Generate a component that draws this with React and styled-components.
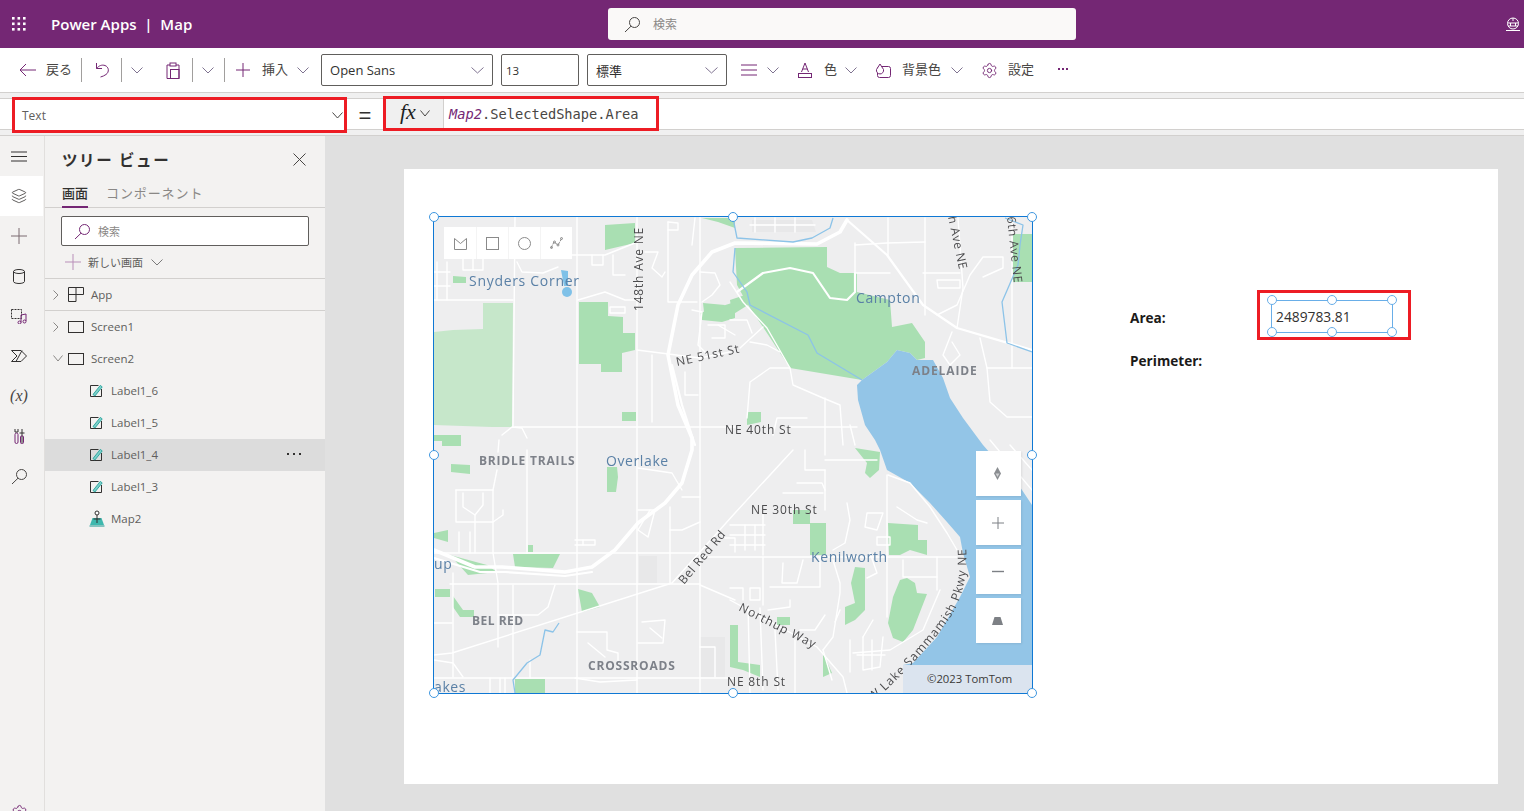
import styled, { createGlobalStyle } from "styled-components";
import { Settings, Layers } from "lucide-react";

const PURPLE = "#742774";
const CJK = `"Open Sans", "Noto Sans CJK JP", sans-serif`;

const GlobalStyle = createGlobalStyle`
  html, body { margin: 0; padding: 0; height: 100%; overflow: hidden; background: #fff; }
  body { font-family: ${CJK}; color: #323130; }
  * { box-sizing: border-box; }
`;

const Page = styled.div`
  width: 1524px;
  height: 811px;
  display: flex;
  flex-direction: column;
  overflow: hidden;
`;

/* header */
const Header = styled.header`
  height: 48px;
  flex-shrink: 0;
  background: ${PURPLE};
  display: flex;
  align-items: center;
  padding-left: 11px;
  position: relative;
`;
const AppTitle = styled.div`
  margin-left: 24px;
  color: #fff;
  font-size: 15px;
  font-weight: 600;
  white-space: pre;
`;
const HeaderSearch = styled.div`
  position: absolute;
  left: 608px;
  top: 8px;
  width: 468px;
  height: 32px;
  background: #faf9f8;
  border-radius: 3px;
  display: flex;
  align-items: center;
  padding-left: 16px;
  gap: 12px;
  font-size: 12px;
  color: #8a8886;
`;
const HeaderRight = styled.div`
  margin-left: auto;
  width: 19px;
  display: flex;
  justify-content: flex-start;
`;

/* toolbar */
const Toolbar = styled.div`
  height: 45px;
  flex-shrink: 0;
  background: #fff;
  border-bottom: 1px solid #d2d0ce;
  display: flex;
  align-items: center;
  padding-left: 19px;
`;
const Tool = styled.span`
  display: flex;
  align-items: center;
  flex-shrink: 0;
  margin-left: ${({ $ml }) => $ml || 0}px;
`;
const ToolLabel = styled(Tool)`
  font-size: 13px;
  line-height: 18px;
  margin-top: -2px;
  color: #484644;
`;
const Sep = styled.span`
  width: 1px;
  height: 24px;
  background: #a19f9d;
  flex-shrink: 0;
  margin-left: ${({ $ml }) => $ml}px;
`;
const Select = styled.div`
  width: ${({ $w }) => $w}px;
  height: 32px;
  flex-shrink: 0;
  margin-left: ${({ $ml }) => $ml}px;
  border: 1px solid #605e5c;
  border-radius: 2px;
  background: #fff;
  display: flex;
  align-items: center;
  justify-content: space-between;
  padding: 0 8px 0 ${({ $pl }) => $pl || 8}px;
  font-size: ${({ $fs }) => $fs || 13}px;
  color: #323130;
`;

/* formula bar */
const FormulaWrap = styled.div`
  flex-shrink: 0;
  background: #f0f0f0;
  padding: 5px 0;
`;
const FormulaBar = styled.div`
  height: 32px;
  background: #fff;
  border-top: 1px solid #d2d0ce;
  border-bottom: 1px solid #d2d0ce;
  display: flex;
  align-items: center;
`;
const NameBox = styled.div`
  width: 335px;
  height: 36px;
  margin-left: 12px;
  margin-top: 2px;
  flex-shrink: 0;
  border: 3px solid #ed1c24;
  background: #fff;
  display: flex;
  align-items: center;
  justify-content: space-between;
  padding: 0 1px 0 7px;
  font-size: 12px;
  color: #605e5c;
  position: relative;
  z-index: 1;
`;
const Equals = styled.div`
  width: 36px;
  text-align: center;
  font-size: 22px;
  line-height: 22px;
  margin-top: 4px;
  color: #323130;
  font-family: "Liberation Sans", sans-serif;
`;
const FormulaBox = styled.div`
  width: 276px;
  height: 35px;
  flex-shrink: 0;
  margin-top: -1px;
  border: 3px solid #ed1c24;
  background: #fff;
  display: flex;
  align-items: stretch;
  position: relative;
  z-index: 1;
`;
const FxButton = styled.div`
  width: 58px;
  background: #f0f0f0;
  border-right: 1px solid #d2d0ce;
  display: flex;
  align-items: center;
  padding-left: 14px;
  gap: 4px;
`;
const FxText = styled.span`
  font-family: "Liberation Serif", serif;
  font-style: italic;
  font-size: 22px;
  line-height: 24px;
  color: #201f1e;
  margin-top: -3px;
`;
const FormulaCode = styled.div`
  padding-left: 5px;
  font-family: "DejaVu Sans Mono", monospace;
  font-size: 13.7px;
  line-height: 31px;
  color: #484644;
  white-space: pre;
`;
const Keyword = styled.span`
  color: ${PURPLE};
  font-style: italic;
`;

/* main */
const Main = styled.div`
  flex: 1;
  min-height: 0;
  display: flex;
  border-top: 1px solid #d2d0ce;
`;
const Rail = styled.nav`
  width: 45px;
  flex-shrink: 0;
  background: #f3f2f1;
  border-right: 1px solid #e1dfdd;
  display: flex;
  flex-direction: column;
`;
const RailItem = styled.div`
  height: 40px;
  width: 43px;
  flex-shrink: 0;
  display: flex;
  align-items: center;
  justify-content: center;
  padding-right: 5px;
  background: ${({ $active }) => ($active ? "#fff" : "transparent")};
  margin-top: ${({ $auto }) => ($auto ? "auto" : "0")};
  margin-bottom: ${({ $auto }) => ($auto ? "-21px" : "0")};
`;
const VarGlyph = styled.span`
  font-family: "Liberation Serif", serif;
  font-style: italic;
  font-size: 16px;
  color: #484644;
`;

const Panel = styled.aside`
  width: 280px;
  flex-shrink: 0;
  background: #f3f2f1;
  display: flex;
  flex-direction: column;
`;
const PanelHead = styled.div`
  height: 47px;
  display: flex;
  align-items: center;
  justify-content: space-between;
  padding: 0 19px 1px 17px;
  font-size: 15.5px;
  font-weight: 600;
  letter-spacing: 1.6px;
  color: #323130;
`;
const Tabs = styled.div`
  height: 25px;
  border-bottom: 1px solid #d2d0ce;
  display: flex;
  gap: 18px;
  padding-left: 17px;
`;
const Tab = styled.div`
  height: 25px;
  font-size: 13px;
  line-height: 21px;
  letter-spacing: ${({ $on }) => ($on ? "0" : "0.9px")};
  color: ${({ $on }) => ($on ? "#323130" : "#8a8886")};
  font-weight: ${({ $on }) => ($on ? 500 : 400)};
  border-bottom: ${({ $on }) => ($on ? `2px solid ${PURPLE}` : "none")};
`;
const TreeSearch = styled.div`
  margin: 8px 16px 0 16px;
  height: 30px;
  background: #fff;
  border: 1px solid #605e5c;
  border-radius: 2px;
  display: flex;
  align-items: center;
  gap: 7px;
  padding-left: 12px;
  font-size: 11px;
  color: #8a8886;
`;
const NewScreen = styled.div`
  height: 33px;
  display: flex;
  align-items: center;
  padding-left: 20px;
  border-bottom: 1px solid #d2d0ce;
  font-size: 11px;
  color: #605e5c;
`;
const TreeRow = styled.div`
  height: 32px;
  display: flex;
  align-items: center;
  padding-left: ${({ $depth }) => ($depth ? 44 : 8)}px;
  padding-bottom: ${({ $line }) => ($line ? 0 : 1)}px;
  background: ${({ $sel }) => ($sel ? "#dcdcdc" : "transparent")};
  border-bottom: ${({ $line }) => ($line ? "1px solid #d2d0ce" : "none")};
  font-size: 11.5px;
  color: #605e5c;
  position: relative;
`;
const Twist = styled.span`
  width: 15px;
  display: flex;
  flex-shrink: 0;
`;
const RowIcon = styled.span`
  width: ${({ $depth }) => ($depth ? 22 : 23)}px;
  display: flex;
  flex-shrink: 0;
`;
const MoreDots = styled.span`
  position: absolute;
  right: 24px;
  top: 14px;
  display: flex;
  gap: 4px;
  i {
    width: 2px;
    height: 2px;
    background: #323130;
  }
`;

/* canvas */
const Canvas = styled.main`
  flex: 1;
  background: #e0e0e0;
  padding: 33px 0 0 79px;
  min-width: 0;
`;
const Screen = styled.div`
  width: 1094px;
  height: 615px;
  background: #fff;
  position: relative;
`;
const MapFrame = styled.div`
  position: absolute;
  left: 29px;
  top: 47px;
  width: 600px;
  height: 478px;
  border: 1px solid #0f78d4;
`;
const MapSvg = styled.svg`
  display: block;
  width: 598px;
  height: 476px;
  filter: blur(0.35px);
`;
const ShapeTools = styled.div`
  position: absolute;
  left: 10px;
  top: 10px;
  height: 32px;
  background: #fff;
  display: flex;
`;
const ShapeTool = styled.div`
  width: 32px;
  display: flex;
  align-items: center;
  justify-content: center;
  border-left: ${({ $first }) => ($first ? "none" : "1px solid #f4f4f4")};
`;
const MapControls = styled.div`
  position: absolute;
  left: 542px;
  top: 234px;
  display: flex;
  flex-direction: column;
  gap: 4px;
`;
const MapControl = styled.div`
  width: 45px;
  height: 45px;
  padding-right: 2px;
  background: #fff;
  box-shadow: 1px 1px 2px rgba(0, 0, 0, 0.08);
  display: flex;
  align-items: center;
  justify-content: center;
`;
const Attribution = styled.div`
  position: absolute;
  right: 0;
  bottom: 0;
  width: 129px;
  height: 28px;
  background: #dbe4ef;
  font-size: 11.3px;
  line-height: 27px;
  color: #3b3a39;
  padding-left: 24px;
  white-space: nowrap;
`;
const Handle = styled.span`
  position: absolute;
  left: ${({ $x }) => $x}px;
  top: ${({ $y }) => $y}px;
  width: 10px;
  height: 10px;
  border-radius: 50%;
  background: #fff;
  border: 1px solid ${({ $c }) => $c || "#3f97e0"};
`;
const FieldLabel = styled.div`
  position: absolute;
  left: 726px;
  top: ${({ $y }) => $y}px;
  font-size: 13.6px;
  line-height: 18px;
  font-weight: 700;
  color: #1b1a19;
`;
const RedFrame = styled.div`
  position: absolute;
  left: 853px;
  top: 121px;
  width: 154px;
  height: 50px;
  border: 3px solid #ed1c24;
`;
const ValueBox = styled.div`
  position: absolute;
  left: 867px;
  top: 131px;
  width: 122px;
  height: 33px;
  border: 1px solid #69aee8;
  font-size: 13.8px;
  line-height: 32px;
  padding-left: 4px;
  color: #323130;
`;

/* icons */
const Svg = ({ w = 16, h = 16, children, stroke = PURPLE, sw = 1, ...rest }) => (
  <svg width={w} height={h} viewBox={`0 0 ${w} ${h}`} fill="none" stroke={stroke} strokeWidth={sw} style={{ display: "block" }} {...rest}>
    {children}
  </svg>
);
const Chevron = ({ w = 12, stroke = "#7f7390" }) => (
  <Svg w={w} h={7} stroke={stroke}>
    <path d={`M0.5 0.5L${w / 2} 6L${w - 0.5} 0.5`} />
  </Svg>
);
const TwistRight = () => (
  <Svg w={6} h={10} stroke="#8a8886"><path d="M0.5 0.5L5 5L0.5 9.5" /></Svg>
);
const Waffle = () => (
  <svg width="16" height="16" viewBox="0 0 16 16" fill="#fff" style={{ display: "block" }}>
    {[1, 6.5, 12].map((y) => [1, 6.5, 12].map((x) => <rect key={`${x}-${y}`} x={x} y={y} width="2.6" height="2.6" />))}
  </svg>
);
const SearchIcon = ({ stroke = "#484644", w = 17 }) => (
  <Svg w={w} h={w} stroke={stroke} viewBox="0 0 17 17">
    <circle cx="10.5" cy="6.5" r="5" />
    <path d="M7 10.2L1 16" />
  </Svg>
);
const Globe = () => (
  <Svg w={16} h={16} stroke="#fff">
    <circle cx="8" cy="7.5" r="5.5" />
    <path d="M3 7h10M3 10h10M8 2v3M5.5 7v3M10.5 7v3M1 14.5h14" />
  </Svg>
);
const Close = () => (
  <Svg w={13} h={13} stroke="#484644">
    <path d="M0.5 0.5L12.5 12.5M12.5 0.5L0.5 12.5" />
  </Svg>
);
const Plus = ({ s = 14, stroke = PURPLE }) => (
  <Svg w={s} h={s} stroke={stroke}>
    <path d={`M${s / 2} 0V${s}M0 ${s / 2}H${s}`} />
  </Svg>
);
const LabelIcon = () => (
  <svg width="14" height="14" viewBox="0 0 14 14" fill="none" style={{ display: "block" }}>
    <path d="M9.5 1.5H1.5V12.5H12.5V5" stroke="#323130" />
    <path d="M4 10.5L11.3 1.4L13.2 2.9L5.9 12Z" fill="#7fd0ca" stroke="#23a39b" strokeWidth="0.9" />
  </svg>
);
const ScreenIcon = () => (
  <Svg w={16} h={12} stroke="#323130">
    <rect x="0.5" y="0.5" width="15" height="11" />
  </Svg>
);
const AppIcon = () => (
  <Svg w={16} h={15} stroke="#323130">
    <path d="M0.5 0.5H15.5V7.5H8V14.5H0.5ZM8 0.5V7.5M0.5 7.5H8" />
  </Svg>
);
const MapNodeIcon = () => (
  <svg width="16" height="17" viewBox="0 0 16 17" style={{ display: "block" }}>
    <path d="M3.5 8H12.5L15 15H1Z" fill="#3fb8ae" />
    <path d="M0.5 16H15.5" stroke="#14958d" strokeWidth="1" />
    <circle cx="8" cy="3" r="2" fill="#fff" stroke="#323130" />
    <path d="M8 5V13M4.5 9H11.5" stroke="#323130" />
  </svg>
);

/* map drawing data, in page coordinates */
const LIGHT = [
  "434,332 453,330 483,329 483,303 513,303 512,427 492,427 434,425",
];
const GREENS = [
  "579,302 608,302 608,316 623,317 623,333 635,333 635,350 622,353 622,372 601,372 601,364 579,364",
  "605,225 635,223 635,243 605,250",
  "622,412 636,412 636,421 622,421",
  "453,276 466,277 466,283 453,283",
  "434,435 461,435 461,446 442,446 442,441 434,441",
  "700,313 735,302 735,318 722,322 702,320",
  "735,248 827,247 827,267 840,273 857,273 857,292 890,300 892,327 912,323 925,342 925,358 917,360 910,353 897,350 887,362 862,380 790,368 763,327 748,305 737,285",
  "1013,234 1032,234 1032,282 1013,282",
  "451,464 470,465 470,474 451,472",
  "607,467 617,467 618,477 616,492 607,492",
  "513,554 560,554 553,568 515,567",
  "528,545 533,545 533,552 528,552",
  "578,589 592,593 600,607 582,612",
  "453,596 463,610 474,610 474,617 460,617 453,607",
  "435,589 450,589 450,597 435,597",
  "515,679 545,679 545,693 515,693",
  "434,533 448,530 448,542 434,538",
  "450,555 487,565 497,572 468,575",
  "793,510 810,510 810,524 793,524",
  "810,523 826,523 826,555 810,555",
  "888,523 918,525 918,540 927,540 927,555 910,550 900,555 889,555",
  "855,567 865,568 865,610 855,620 845,625 845,607 855,603 851,583",
  "907,578 915,583 917,593 927,594 913,630 903,642 893,638 888,623 893,597 900,580",
  "730,625 738,625 738,662 760,665 760,677 743,670 730,667",
  "777,617 790,617 790,625 777,625",
  "823,653 832,673 823,677",
  "855,448 880,452 879,470 870,478 865,473 867,463",
  "747,412 761,412 761,422 747,425",
  "703,303 725,305 720,312 704,312",
  "702,218 735,218 735,228 718,222",
  "730,300 745,295 748,305 732,315",
];
const PATCHES = [
  "639,556 657,556 657,583 639,583",
  "700,637 725,637 725,677 700,677",
  "752,220 812,220 816,232 752,232",
];
const LAKE =
  "857,385 862,380 887,362 897,350 910,353 917,360 933,360 943,378 950,398 963,418 983,445 1020,487 1032,505 1032,693 903,693 903,665 913,663 937,637 960,597 970,577 963,553 960,537 947,522 930,503 910,483 887,470 880,450 875,440 865,425 858,400";
const RIVERS = [
  "733,218 737,238 793,242 812,238 830,228 833,218",
  "735,248 733,272 747,292 750,305 808,335 817,353 862,380",
  "1005,218 1023,225 1020,245 1018,265 1002,302 1007,343 1032,352",
  "559,623 553,632 545,630 540,655 527,663 513,680 515,693",
];
const HIGHWAYS = [
  "434,550 475,567 502,567 565,572 592,567 615,550 638,523 665,503 682,483 692,450 692,438 678,405 668,355 678,305 692,275 712,252 735,243 817,244 840,232 847,220",
];
const MAJOR = [
  "847,220 887,255 923,305 957,328 1032,350",
  "434,558 480,572 505,572 565,576 592,572",
  "672,365 682,405 695,445",
  "737,292 763,273 790,268 813,273 830,298 847,300 855,292 855,273",
];
const ROADS = [
  "577,217 577,693", "637,217 637,693", "700,217 700,693", "515,217 513,427",
  "527,450 527,553", "434,300 513,300", "515,427 735,427",
  "434,553 700,553", "450,584 700,584", "434,678 735,678", "434,655 452,653 672,583 735,513 793,450",
  "637,350 700,358 730,352",
  "700,585 735,600",
  "463,258 463,270 483,270 483,258", "473,258 473,270", "437,262 437,300", "447,262 447,300", "434,272 450,272", "434,286 450,286",
  "517,262 522,272 543,273 558,267", "572,255 605,255 635,243", "578,300 605,292 625,300 637,300",
  "592,255 592,265 603,265 603,255", "613,255 613,275 625,275", "610,307 625,307 625,313 610,313 610,307",
  "645,252 658,252 652,268 662,277 665,272", "668,222 668,302 697,302", "668,222 678,223 678,230 668,230",
  "695,218 692,245", "700,272 715,273 720,285 712,295 702,302", "692,310 702,312 698,345 708,355",
  "708,325 725,325 725,338 712,338", "718,325 735,335", "652,355 652,422", "685,372 685,395 698,395",
  "502,435 512,427 522,428 527,438", "499,440 498,452",
  "750,225 815,225", "755,218 755,232", "775,218 775,232", "795,218 795,232",
  "855,245 887,243 925,242", "855,243 855,273", "855,273 890,273", "888,218 888,255", "925,218 925,315",
  "923,273 960,273", "937,280 960,280 960,288 938,288 937,280",
  "937,315 957,305 970,275 983,257 1003,257 1003,268 983,277", "958,218 963,288 957,328",
  "1012,218 1012,368", "980,338 987,368 1032,368", "987,368 990,402 1007,417 1032,417",
  "952,332 943,355 950,365 960,355 952,342",
  "730,282 743,302 767,328 790,368 793,385 823,398 840,405 843,445",
  "730,320 747,320 752,333", "740,348 763,327", "750,342 767,345 780,352", "790,368 770,368 750,382 747,418",
  "825,398 825,455", "788,427 857,427", "807,418 777,418 773,435", "850,425 855,445",
  "805,450 805,470 825,470", "825,460 877,460", "797,483 822,483 825,490", "783,493 823,493",
  "847,503 850,520 845,543 833,550", "825,470 825,510",
  "730,525 765,525", "730,535 765,535", "730,545 765,545", "745,525 745,550", "755,525 755,550", "763,513 763,555",
  "700,557 957,557", "783,563 782,583 797,583 803,560", "820,557 820,587 770,587",
  "833,560 840,583 840,593 833,637 823,650", "870,553 877,573 867,578",
  "730,588 743,588 743,600", "750,588 760,588 760,600 750,600 750,588", "763,557 763,605",
  "730,600 817,647 843,677 847,693", "760,608 763,690", "775,630 778,690", "795,640 795,693", "748,605 750,693",
  "768,610 790,607 790,600", "800,630 815,630 825,615", "840,610 835,622",
  "887,475 887,617", "853,653 890,650 923,630 940,590", "863,637 863,670 880,667 883,637", "873,620 863,637",
  "850,640 850,672", "872,640 872,670", "857,655 885,655", "823,650 832,680",
  "937,557 937,590", "903,560 903,577 937,577", "888,475 910,483 930,507 947,533 957,550",
  "867,513 883,513 877,530 865,527 867,513", "877,537 890,537 890,545 877,545 877,537", "897,507 917,520 927,523",
  "497,470 493,490 493,553 498,583 498,647", "456,490 493,490", "456,490 456,522 493,522 503,515 503,510", "463,493 463,507 475,515 483,505 483,493",
  "475,515 475,553", "459,532 459,553", "470,532 470,553", "513,585 513,677", "555,585 548,607 538,615 498,615",
  "453,573 453,677", "434,623 452,623", "434,660 453,663 463,677", "530,660 530,678", "500,678 500,693", "505,678 505,693", "490,678 490,693",
  "577,632 607,632 607,650 618,653 618,667", "588,643 605,657", "575,540 595,540 595,545 575,545", "583,540 583,545",
  "638,510 655,510 648,537 638,530", "650,510 638,530", "638,468 672,473 682,490", "670,507 670,583",
  "670,530 682,530 700,522", "700,497 682,497", "642,622 665,620 663,643 638,643", "650,628 662,638",
  "725,538 735,538 735,552", "700,647 715,647 715,677", "575,678 600,682 637,680",
  "990,440 1032,490", "1032,470 1010,445",
];
const PLACE = "#5a80a6";
const ROADTEXT = "#4b4b4d";
const AREA = "#7d8189";
const LABELS = [
  { t: "Snyders Corner", x: 469, y: 286, fs: 14, c: PLACE, ls: 0.7 },
  { t: "Campton", x: 856, y: 303, fs: 14, c: PLACE, ls: 0.6 },
  { t: "Overlake", x: 606, y: 466, fs: 14, c: PLACE, ls: 0.6 },
  { t: "Kenilworth", x: 811, y: 562, fs: 14, c: PLACE, ls: 0.6 },
  { t: "up", x: 434, y: 569, fs: 14, c: PLACE, ls: 0.6 },
  { t: "akes", x: 434, y: 692, fs: 14, c: PLACE, ls: 0.6 },
  { t: "ADELAIDE", x: 912, y: 375, fs: 12, c: AREA, w: 700, ls: 0.9 },
  { t: "BRIDLE TRAILS", x: 479, y: 465, fs: 12, c: AREA, w: 700, ls: 0.8 },
  { t: "BEL RED", x: 472, y: 625, fs: 12, c: AREA, w: 700, ls: 0.5 },
  { t: "CROSSROADS", x: 588, y: 670, fs: 12, c: AREA, w: 700, ls: 0.8 },
  { t: "NE 40th St", x: 725, y: 434, fs: 12, c: ROADTEXT, ls: 0.85 },
  { t: "NE 30th St", x: 751, y: 514, fs: 12, c: ROADTEXT, ls: 0.85 },
  { t: "NE 8th St", x: 727, y: 686, fs: 12, c: ROADTEXT, ls: 0.85 },
  { t: "NE 51st St", x: 677, y: 366, fs: 12, c: ROADTEXT, ls: 0.85, r: -12 },
  { t: "148th Ave NE", x: 643, y: 311, fs: 12, c: ROADTEXT, ls: 0.8, r: -90 },
  { t: "h Ave NE", x: 948, y: 217, fs: 12, c: ROADTEXT, ls: 0.6, r: 78 },
  { t: "6th Ave NE", x: 1007, y: 217, fs: 12, c: ROADTEXT, ls: 0.6, r: 84 },
  { t: "Bel Red Rd", x: 684, y: 585, fs: 12, c: ROADTEXT, ls: 0.6, r: -50 },
  { t: "Northup Way", x: 738, y: 610, fs: 12, c: ROADTEXT, ls: 1, r: 27 },
];

const MapArt = () => (
  <MapSvg viewBox="434 217 598 476">
    <rect x="434" y="217" width="598" height="476" fill="#eeeeef" />
    {PATCHES.map((p) => <polygon key={p} points={p} fill="#e8e8e9" />)}
    {LIGHT.map((p) => <polygon key={p} points={p} fill="#c6e7ca" />)}
    {GREENS.map((p) => <polygon key={p} points={p} fill="#a9dfb2" />)}
    <polygon points={LAKE} fill="#93c5e7" />
    <g fill="none" stroke="#fff" strokeLinejoin="round" strokeLinecap="round">
      {ROADS.map((p, i) => <polyline key={i} points={p} strokeWidth="1.4" />)}
      {MAJOR.map((p) => <polyline key={p} points={p} strokeWidth="2.2" />)}
      {HIGHWAYS.map((p) => <polyline key={p} points={p} strokeWidth="3.6" />)}
    </g>
    <g fill="none" stroke="#8cc3e8" strokeWidth="1.3" strokeLinejoin="round">
      {RIVERS.map((p) => <polyline key={p} points={p} />)}
    </g>
    <ellipse cx="567" cy="292" rx="5" ry="5" fill="#7fc1e8" />
    <polygon points="561,270 568,271 568,286 564,286" fill="#7fc1e8" />
    <g fontFamily='"Open Sans", sans-serif'>
      {LABELS.map((l) => (
        <text
          key={l.t}
          x={l.x}
          y={l.y}
          fontSize={l.fs}
          fill={l.c}
          fontWeight={l.w || 400}
          letterSpacing={l.ls}
          transform={l.r ? `rotate(${l.r} ${l.x} ${l.y})` : undefined}
        >
          {l.t}
        </text>
      ))}
      <path id="lakeRoad" d="M858 712 L884 692 C910 668 935 640 952 615 C962 597 968 578 966 548" fill="none" />
      <text fontSize="12" fill={ROADTEXT} letterSpacing="1" textAnchor="end">
        <textPath href="#lakeRoad" startOffset="100%">W Lake Sammamish Pkwy NE</textPath>
      </text>
    </g>
  </MapSvg>
);

const ShapeBar = () => (
  <ShapeTools>
    <ShapeTool $first>
      <Svg w={13} h={13} stroke="#8a8a8a"><path d="M0.5 1.5L6.5 6.5L12.5 1.5V12.5H0.5Z" /></Svg>
    </ShapeTool>
    <ShapeTool>
      <Svg w={13} h={13} stroke="#8a8a8a"><rect x="0.5" y="0.5" width="12" height="12" /></Svg>
    </ShapeTool>
    <ShapeTool>
      <Svg w={13} h={13} stroke="#8a8a8a"><circle cx="6.5" cy="6.5" r="6" /></Svg>
    </ShapeTool>
    <ShapeTool>
      <Svg w={13} h={12} stroke="#8a8a8a"><path d="M1 11L4 5L8 8L12 1" strokeDasharray="3 1" /><circle cx="1.5" cy="10.5" r="1" /><circle cx="4.5" cy="5" r="1" /><circle cx="8" cy="8" r="1" /><circle cx="11.5" cy="1.5" r="1" /></Svg>
    </ShapeTool>
  </ShapeTools>
);

const Controls = () => (
  <MapControls>
    <MapControl>
      <svg width="7" height="13" viewBox="0 0 7 13" style={{ display: "block" }}><path d="M3.5 0L7 6.5L3.5 13L0 6.5Z" fill="#8a8d91" /><path d="M1.5 6.5H5.5L3.5 10Z" fill="#fff" opacity="0.6" /></svg>
    </MapControl>
    <MapControl><Plus s={12} stroke="#7d8085" /></MapControl>
    <MapControl><Svg w={12} h={3} stroke="#7d8085" sw={1.4}><path d="M0 1.5H12" /></Svg></MapControl>
    <MapControl>
      <svg width="11" height="8" viewBox="0 0 11 8" style={{ display: "block" }}><path d="M2.5 0H8.5L11 8H0Z" fill="#7d8085" /></svg>
    </MapControl>
  </MapControls>
);

const TREE = [
  { name: "Label1_6" },
  { name: "Label1_5" },
  { name: "Label1_4", sel: true },
  { name: "Label1_3" },
];

const App = () => (
  <Page>
    <GlobalStyle />
    <Header>
      <Waffle />
      <AppTitle>Power Apps  |  Map</AppTitle>
      <HeaderSearch>
        <SearchIcon />
        検索
      </HeaderSearch>
      <HeaderRight><Globe /></HeaderRight>
    </Header>

    <Toolbar>
      <Tool>
        <Svg w={17} h={14}><path d="M17 7H1M7 1L1 7L7 13" /></Svg>
      </Tool>
      <ToolLabel $ml={10}>戻る</ToolLabel>
      <Sep $ml={9} />
      <Tool $ml={13}>
        <Svg w={15} h={16}><path d="M1.5 1V6.5H7" /><path d="M1.5 6.5C4 3.5 7 2.5 10 3.5C14 5 14.5 10 11 12.5C9.5 13.6 7.5 14.5 5.5 15" /></Svg>
      </Tool>
      <Sep $ml={11} />
      <Tool $ml={9}><Chevron /></Tool>
      <Tool $ml={23}>
        <Svg w={14} h={17}><path d="M4 3H1V16.5H13V3H10" /><rect x="4" y="1" width="6" height="3" /><rect x="4.5" y="7.5" width="8.5" height="9" /></Svg>
      </Tool>
      <Sep $ml={12} />
      <Tool $ml={9}><Chevron /></Tool>
      <Sep $ml={10} />
      <Tool $ml={11}><Plus /></Tool>
      <ToolLabel $ml={12}>挿入</ToolLabel>
      <Tool $ml={9}><Chevron /></Tool>
      <Select $ml={12} $w={172}>Open Sans<Chevron w={13} /></Select>
      <Select $ml={8} $w={78} $fs={11.5} $pl={4}>13</Select>
      <Select $ml={8} $w={140}>標準<Chevron w={13} /></Select>
      <Tool $ml={14}>
        <Svg w={16} h={12}><path d="M0 1H16M0 6H16M0 11H16" /></Svg>
      </Tool>
      <Tool $ml={10}><Chevron /></Tool>
      <Tool $ml={19}>
        <Svg w={14} h={16}><path d="M3.5 10L7 1L10.5 10M4.7 7H9.3" /><rect x="0.5" y="11.5" width="13" height="4" /></Svg>
      </Tool>
      <ToolLabel $ml={12}>色</ToolLabel>
      <Tool $ml={8}><Chevron /></Tool>
      <Tool $ml={18}>
        <Svg w={16} h={15}><rect x="2.5" y="3.5" width="13" height="11" rx="2" /><path d="M5 1L8.5 6.5A3.6 3.6 0 1 1 1.5 6.5Z" fill="#fff" /></Svg>
      </Tool>
      <ToolLabel $ml={11}>背景色</ToolLabel>
      <Tool $ml={10}><Chevron /></Tool>
      <Tool $ml={18}><Settings size={17} strokeWidth={1.3} color={PURPLE} /></Tool>
      <ToolLabel $ml={10}>設定</ToolLabel>
      <ToolLabel $ml={24}>
        <Svg w={11} h={3} stroke="none"><rect x="0" y="0" width="2" height="2" fill={PURPLE} /><rect x="4" y="0" width="2" height="2" fill={PURPLE} /><rect x="8" y="0" width="2" height="2" fill={PURPLE} /></Svg>
      </ToolLabel>
    </Toolbar>

    <FormulaWrap>
      <FormulaBar>
        <NameBox>Text<Chevron w={11} stroke="#484644" /></NameBox>
        <Equals>=</Equals>
        <FormulaBox>
          <FxButton>
            <FxText>fx</FxText>
            <Chevron w={10} stroke="#484644" />
          </FxButton>
          <FormulaCode><Keyword>Map2</Keyword>.SelectedShape.Area</FormulaCode>
        </FormulaBox>
      </FormulaBar>
    </FormulaWrap>

    <Main>
      <Rail>
        <RailItem>
          <Svg w={16} h={11} stroke="#323130"><path d="M0 1H16M0 5.5H16M0 10H16" /></Svg>
        </RailItem>
        <RailItem $active>
          <Layers size={16} strokeWidth={1.3} color="#484644" />
        </RailItem>
        <RailItem><Plus s={16} stroke="#7b6a70" /></RailItem>
        <RailItem>
          <Svg w={12} h={15} stroke="#323130"><ellipse cx="6" cy="2.5" rx="5.5" ry="2" /><path d="M0.5 2.5V12.5C0.5 13.6 3 14.5 6 14.5C9 14.5 11.5 13.6 11.5 12.5V2.5" /></Svg>
        </RailItem>
        <RailItem>
          <Svg w={16} h={15} stroke="#323130"><rect x="0.5" y="0.5" width="10" height="9" strokeDasharray="2 1" /><path d="M10 13.5V6L15 5V12" stroke={PURPLE} /><circle cx="8.5" cy="13.5" r="1.5" stroke={PURPLE} /><circle cx="13.5" cy="12.5" r="1.5" stroke={PURPLE} /></Svg>
        </RailItem>
        <RailItem>
          <Svg w={16} h={12} stroke="#323130"><path d="M0.5 0.5H10L15.5 6L10 11.5H0.5L6 6Z" /><path d="M11 0.5L5 11.5" /></Svg>
        </RailItem>
        <RailItem><VarGlyph>(x)</VarGlyph></RailItem>
        <RailItem>
          <Svg w={11} h={16} stroke="#323130"><rect x="1" y="5" width="3" height="10.5" rx="1.5" stroke={PURPLE} /><path d="M1 1V4H4V1M8 1V15" /><rect x="6.5" y="8" width="3" height="7.5" rx="1" stroke={PURPLE} /><path d="M5.5 5H10.5" /></Svg>
        </RailItem>
        <RailItem><SearchIcon stroke="#484644" /></RailItem>
        <RailItem $auto>
          <Settings size={17} strokeWidth={1.3} color={PURPLE} />
        </RailItem>
      </Rail>

      <Panel>
        <PanelHead>ツリー ビュー<Close /></PanelHead>
        <Tabs>
          <Tab $on>画面</Tab>
          <Tab>コンポーネント</Tab>
        </Tabs>
        <TreeSearch>
          <SearchIcon stroke={PURPLE} />
          検索
        </TreeSearch>
        <NewScreen>
          <Plus s={16} stroke="#b98fb9" />
          <Tool $ml={7}>新しい画面</Tool>
          <Tool $ml={8}><Chevron stroke="#7a7a7a" /></Tool>
        </NewScreen>
        <TreeRow $line>
          <Twist><TwistRight /></Twist>
          <RowIcon><AppIcon /></RowIcon>
          App
        </TreeRow>
        <TreeRow>
          <Twist><TwistRight /></Twist>
          <RowIcon><ScreenIcon /></RowIcon>
          Screen1
        </TreeRow>
        <TreeRow>
          <Twist><Chevron w={10} stroke="#8a8886" /></Twist>
          <RowIcon><ScreenIcon /></RowIcon>
          Screen2
        </TreeRow>
        {TREE.map((r) => (
          <TreeRow key={r.name} $depth $sel={r.sel}>
            <RowIcon $depth><LabelIcon /></RowIcon>
            {r.name}
            {r.sel && <MoreDots><i /><i /><i /></MoreDots>}
          </TreeRow>
        ))}
        <TreeRow $depth>
          <RowIcon $depth><MapNodeIcon /></RowIcon>
          Map2
        </TreeRow>
      </Panel>

      <Canvas>
        <Screen>
          <MapFrame>
            <MapArt />
            <ShapeBar />
            <Controls />
            <Attribution>©2023 TomTom</Attribution>
            <Handle $x={-5} $y={-5} />
            <Handle $x={294} $y={-5} />
            <Handle $x={593} $y={-5} />
            <Handle $x={-5} $y={233} />
            <Handle $x={593} $y={233} />
            <Handle $x={-5} $y={471} />
            <Handle $x={294} $y={471} />
            <Handle $x={593} $y={471} />
          </MapFrame>

          <FieldLabel $y={140}>Area:</FieldLabel>
          <FieldLabel $y={183}>Perimeter:</FieldLabel>
          <RedFrame />
          <ValueBox>2489783.81</ValueBox>
          {[131, 163].map((y) =>
            [863, 923, 983].map((x) => <Handle key={`${x}-${y}`} $x={x} $y={y - 5} $c="#69aee8" />)
          )}
        </Screen>
      </Canvas>
    </Main>
  </Page>
);

export default App;
